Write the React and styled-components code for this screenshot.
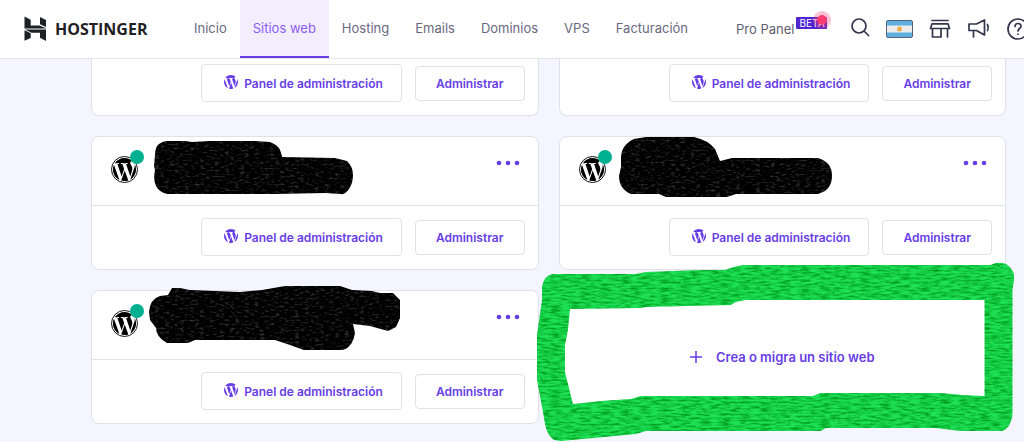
import React from "react";
import styled, { createGlobalStyle } from "styled-components";

const GlobalStyle = createGlobalStyle`
  body {
    margin: 0;
    background: #f4f5ff;
    font-family: Inter, "Liberation Sans", sans-serif;
    overflow: hidden;
  }
`;

const Header = styled.header`
  display: flex;
  align-items: stretch;
  height: 58px;
  padding-left: 24px;
  background: #ffffff;
  border-bottom: 1px solid #e3e3e8;
  overflow: hidden;
`;
const Brand = styled.a`
  display: flex;
  flex: 0 0 157px;
  align-items: center;
  gap: 8px;
  color: #1f2023;
  font-family: "Open Sans", sans-serif;
  font-size: 16px;
  font-weight: 700;
  text-decoration: none;
`;
const Nav = styled.nav`
  display: flex;
  flex: none;
`;
const NavLink = styled.a`
  display: flex;
  align-items: center;
  padding: 0 13px 2px;
  font-size: 13px;
  text-decoration: none;
  white-space: nowrap;
  color: ${props => (props.$active ? "#8c5cf5" : "#6a6880")};
  background: ${props => (props.$active ? "#f2eefe" : "transparent")};
  box-shadow: ${props => (props.$active ? "inset 0 -2px #673de6" : "none")};
`;
const Tools = styled.div`
  display: flex;
  flex: none;
  align-items: center;
  gap: 16px;
  margin-left: 35px;
`;
const ProPanel = styled.a`
  display: flex;
  align-items: center;
  gap: 2px;
  margin-right: 7px;
  padding-bottom: 1px;
  font-size: 13px;
  text-decoration: none;
  white-space: nowrap;
  color: #5f5d70;
`;
const Beta = styled.span`
  position: relative;
  width: 31px;
  height: 12px;
  margin-bottom: 12px;
  padding-left: 3px;
  box-sizing: border-box;
  border-radius: 1px;
  background: #5025d1;
  color: #ffffff;
  font-size: 10px;
  line-height: 12px;

  &::after {
    content: "";
    position: absolute;
    top: -6px;
    right: -4px;
    width: 10px;
    height: 10px;
    border: 4px solid rgba(255, 61, 113, 0.3);
    border-radius: 50%;
    background: #ff3d71;
    background-clip: padding-box;
  }
`;
const IconButton = styled.button`
  display: flex;
  flex: none;
  padding: 0;
  border: none;
  background: none;
  color: ${props => (props.$accent ? "#673de6" : "#36344d")};
`;

const Sites = styled.main`
  display: grid;
  grid-template-columns: 1fr 1fr;
  gap: 20px;
  padding: 0 18px 18px 91px;
`;
const Card = styled.article`
  position: relative;
  min-width: 0;
  background: #ffffff;
  border: 1px solid #e1e1e8;
  border-top-width: ${props => (props.$scrolled ? "0" : "1px")};
  border-radius: ${props => (props.$scrolled ? "0 0 8px 8px" : "8px")};
`;
const CardTop = styled.div`
  display: flex;
  align-items: flex-start;
  justify-content: space-between;
  height: 49px;
  padding: 19px 18px 0 19px;
  border-bottom: 1px solid #e1e1e8;
`;
const Avatar = styled.div`
  position: relative;
  display: flex;
  color: #000000;

  &::after {
    content: "";
    position: absolute;
    top: -6px;
    right: -6px;
    width: 14px;
    height: 14px;
    border-radius: 50%;
    background: #00b090;
  }
`;
const Actions = styled.div`
  display: flex;
  align-items: center;
  justify-content: flex-end;
  gap: 13px;
  padding: ${props => (props.$scrolled ? "5px" : "12px")} 13px 13px;
`;
const ActionButton = styled.button`
  display: flex;
  align-items: center;
  justify-content: center;
  gap: 6px;
  height: ${props => (props.$large ? "38px" : "35px")};
  padding: ${props => (props.$large ? "0 18px 0 22px" : "0 20px")};
  border: 1px solid #e1e1e6;
  border-radius: 4px;
  background: #ffffff;
  color: #673de6;
  font-family: inherit;
  font-size: 12px;
  font-weight: 600;
  white-space: nowrap;

  svg {
    margin-bottom: 3px;
  }
`;
const CreateButton = styled.button`
  display: flex;
  align-items: center;
  justify-content: center;
  gap: 14px;
  width: 100%;
  height: 100%;
  padding: 0;
  border: none;
  border-radius: 8px;
  background: none;
  color: #673de6;
  font-family: inherit;
  font-size: 13px;
  font-weight: 600;
`;
const Scribble = styled.svg`
  position: absolute;
  left: 54px;
  top: -6px;
  pointer-events: none;
`;
const Frame = styled.svg`
  position: absolute;
  left: -23px;
  top: -29px;
  width: calc(100% + 32px);
  height: 180px;
  pointer-events: none;
`;

const Wordpress = ({ size, ring }) => (
  <svg
    width={size}
    height={size}
    viewBox={ring ? "8 8 496 496" : "43 43 426 426"}
    fill="currentColor"
    aria-hidden="true"
  >
    {ring && (
      <circle cx="256" cy="256" r="239" fill="none" stroke="currentColor" strokeWidth="17" />
    )}
    <path d="M61.7 169.4l101.5 278C92.2 413 43.3 340.2 43.3 256c0-30.9 6.6-60.1 18.4-86.6zm337.9 75.9c0-26.3-9.4-44.5-17.5-58.7-10.8-17.5-20.9-32.4-20.9-49.9 0-19.6 14.8-37.8 35.7-37.8.9 0 1.8.1 2.8.2-37.9-34.7-88.3-55.9-143.7-55.9-74.3 0-139.7 38.1-177.8 95.9 5 .2 9.7.3 13.7.3 22.2 0 56.7-2.7 56.7-2.7 11.5-.7 12.8 16.2 1.4 17.5 0 0-11.5 1.3-24.3 2l77.5 230.4L249.8 247l-33.1-90.8c-11.5-.7-22.3-2-22.3-2-11.5-.7-10.1-18.2 1.3-17.5 0 0 35.1 2.7 56 2.7 22.2 0 56.7-2.7 56.7-2.7 11.5-.7 12.8 16.2 1.4 17.5 0 0-11.5 1.3-24.3 2l76.9 228.7 21.2-70.9c9-29.4 16-50.5 16-68.7zm-139.9 29.3l-63.8 185.5c19.1 5.6 39.2 8.7 60.1 8.7 24.8 0 48.5-4.3 70.6-12.1-.6-.9-1.1-1.9-1.5-2.9l-65.4-179.2zm183-120.7c.9 6.8 1.4 14 1.4 21.9 0 21.6-4 45.8-16.2 76.2l-65 187.9C426.2 403 468.7 334.5 468.7 256c0-37-9.4-71.8-26-102.1z" />
  </svg>
);

const Logo = () => (
  <svg width="23" height="26" viewBox="0 0 23 26" fill="currentColor" aria-hidden="true">
    <path d="M.5 11.600V.5l6.200 3.200v5.800h8.800l6.500 2.800v.300H.5zM16 8.300V.9l6 3.200v7zM.5 14.200l6.200 3V22L.5 24.800zM1 13.400h21V25l-6-3.200v-5.100H7.500z" />
  </svg>
);

const Line = ({ children, width = 24 }) => (
  <svg
    width={width}
    height="24"
    viewBox={`0 0 ${width} 24`}
    fill="none"
    stroke="currentColor"
    strokeWidth="1.700"
    strokeLinecap="round"
    strokeLinejoin="round"
    aria-hidden="true"
  >
    {children}
  </svg>
);

const Flag = () => (
  <svg width="27" height="18" viewBox="0 0 27 18" aria-hidden="true">
    <rect x=".5" y=".5" width="26" height="17" rx="1.500" fill="#ececec" />
    <path d="M1 1h25v4.500H1zM1 12.500h25V17H1z" fill="#5eaee0" />
    <circle cx="13.500" cy="9" r="2.500" fill="#e8b04c" />
    <rect x=".5" y=".5" width="26" height="17" rx="1.500" fill="none" stroke="#55627a" />
  </svg>
);

// marker grain shared by the scribbles and the green frame
const Grain = () => (
  <svg width="0" height="0" style={{ position: "absolute" }} aria-hidden="true">
    <defs>
      <filter
        id="ink"
        x="0"
        y="0"
        width="100%"
        height="100%"
        colorInterpolationFilters="sRGB"
      >
        <feTurbulence type="fractalNoise" baseFrequency="0.2 0.5" numOctaves="2" seed="4" />
        <feColorMatrix values="0 0 0 0 .3  0 0 0 0 .3  0 0 0 0 .3  2 0 0 0 -1" />
        <feComposite in2="SourceGraphic" operator="atop" />
      </filter>
      <filter
        id="marker"
        x="0"
        y="0"
        width="100%"
        height="100%"
        colorInterpolationFilters="sRGB"
      >
        <feTurbulence type="fractalNoise" baseFrequency="0.1 0.5" numOctaves="3" seed="8" />
        <feColorMatrix values="0 0 0 0 0  0 0 0 0 .62  0 0 0 0 .12  2.400 0 0 0 -.9" />
        <feComposite in2="SourceGraphic" operator="atop" />
      </filter>
    </defs>
  </svg>
);

const scribbles = [
  "M155 155Q155 147 159 144T167 141H185L192 142 210 141H255L270 142Q278 145 280 150T282 157L335 158 347 161Q353 167 353 175T349 189T341 194L325 193 275 194H167Q159 192 156 186T155 170L154 166Z",
  "M620 158Q620 145 633 139L645 137H693Q707 140 714 149L719 161 731 158H817Q831 162 831 176T817 194H735L726 197H665L658 194H630Q618 189 618 176L620 167Z",
  "M149 312Q150 299 160 296L168 295 172 288H180L190 290 240 292 262 290 285 286H340L352 290 372 291 380 293H393L400 300V318L396 327 388 331 370 326 353 324 355 333Q353 347 343 350H304L290 345 275 340H195L188 343H167Q156 337 156 328L150 320Z"
];

const links = ["Inicio", "Sitios web", "Hosting", "Emails", "Dominios", "VPS", "Facturación"];

const SiteActions = ({ scrolled }) => (
  <Actions $scrolled={scrolled}>
    <ActionButton type="button" $large>
      <Wordpress size={14} />
      Panel de administración
    </ActionButton>
    <ActionButton type="button">Administrar</ActionButton>
  </Actions>
);

const SiteCard = ({ ink, viewBox }) => (
  <Card>
    <CardTop>
      <Avatar>
        <Wordpress size={27} ring />
      </Avatar>
      <IconButton type="button" $accent aria-label="Más opciones">
        <svg width="24" height="14" viewBox="0 0 24 14" fill="currentColor">
          <circle cx="3" cy="7" r="2.300" />
          <circle cx="12" cy="7" r="2.300" />
          <circle cx="21" cy="7" r="2.300" />
        </svg>
      </IconButton>
    </CardTop>
    <SiteActions />
    <Scribble width="264" height="72" viewBox={viewBox} aria-hidden="true">
      <path d={ink} fill="#000000" filter="url(#ink)" />
    </Scribble>
  </Card>
);

const App = () => (
  <>
    <GlobalStyle />
    <Grain />
    <Header>
      <Brand href="#">
        <Logo />
        HOSTINGER
      </Brand>
      <Nav>
        {links.map(link => (
          <NavLink key={link} href="#" $active={link === "Sitios web"}>
            {link}
          </NavLink>
        ))}
      </Nav>
      <Tools>
        <ProPanel href="#">
          Pro Panel
          <Beta>BETA</Beta>
        </ProPanel>
        <IconButton type="button" aria-label="Buscar">
          <Line width={20}>
            <circle cx="9" cy="9" r="7" />
            <path d="M14 14l4.500 4.500" />
          </Line>
        </IconButton>
        <IconButton type="button" aria-label="Idioma">
          <Flag />
        </IconButton>
        <IconButton type="button" aria-label="Tienda">
          <Line width={22}>
            <path d="M3 3.500h16M3 6.800h16l1.500 4.700h-19zM3.500 11.500V20h8.500v-8.500M18.500 11.500V20" />
          </Line>
        </IconButton>
        <IconButton type="button" aria-label="Novedades">
          <Line width={23}>
            <path d="M2 7h7.500l8-4v15l-8-4.500H2zM6.500 13.500v6.500M20.500 7.500q1.500 3 0 6" />
          </Line>
        </IconButton>
        <IconButton type="button" aria-label="Ayuda">
          <Line>
            <circle cx="12" cy="12" r="10" />
            <path d="M9 9.500q0-3 3-3t3 2.700c0 2.300-3 2.300-3 4.800M12 17v.2" />
          </Line>
        </IconButton>
      </Tools>
    </Header>
    <Sites>
      <Card $scrolled>
        <SiteActions scrolled />
      </Card>
      <Card $scrolled>
        <SiteActions scrolled />
      </Card>
      <SiteCard ink={scribbles[0]} viewBox="146 131 264 72" />
      <SiteCard ink={scribbles[1]} viewBox="613 131 264 72" />
      <SiteCard ink={scribbles[2]} viewBox="146 285 264 72" />
      <Card>
        <CreateButton type="button">
          <svg width="12" height="12" viewBox="0 0 12 12" stroke="currentColor" strokeWidth="1.500">
            <path d="M6 0v12M0 6h12" />
          </svg>
          Crea o migra un sitio web
        </CreateButton>
        <Frame viewBox="536 262 478 180" preserveAspectRatio="none" aria-hidden="true">
          <path
            d="M541 287Q543 275 552 274H635L645 272 700 270H724L733 267 742 265H990L995 263H1003Q1012 266 1014 277L1012 290V415Q1010 428 1002 431H960L935 428H825L820 431H645L635 434 560 441 553 440Q546 435 544 424L542 412 536 380V335L541 300ZM569 309L567 330 564 345V372L572 404 600 401 630 399 640 396H812L820 393H940L962 395 984 396V300H745L735 302 730 305 645 307 640 308Z"
            fill="#1ee056"
            fillRule="evenodd"
            filter="url(#marker)"
          />
        </Frame>
      </Card>
    </Sites>
  </>
);

export default App;
